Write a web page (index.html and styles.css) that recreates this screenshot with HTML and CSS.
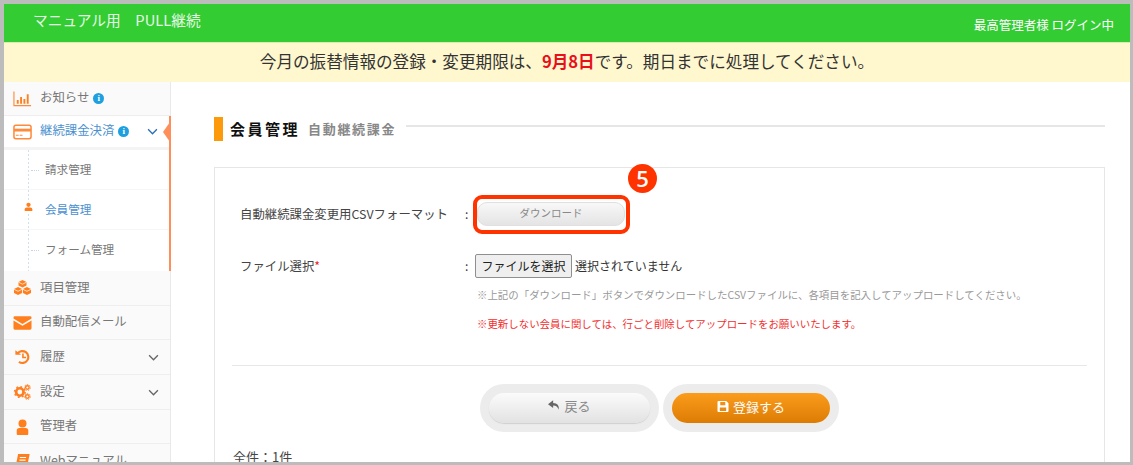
FILE: index.html
```html
<!DOCTYPE html>
<html lang="ja">
<head>
<meta charset="utf-8">
<title>会員管理</title>
<link rel="stylesheet" href="styles.css">
</head>
<body>
<div class="frame">
  <header class="topbar">
    <div class="brand">マニュアル用　PULL継続</div>
    <div class="login">最高管理者様 ログイン中</div>
  </header>
  <div class="notice">今月の振替情報の登録・変更期限は、<strong>9月8日</strong>です。期日までに処理してください。</div>
  <div class="layout">
    <nav class="sidebar">
      <a class="item h34">
        <svg class="ico" viewBox="0 0 20 16"><path d="M1 0v15h18" fill="none" stroke="#ff8a3c" stroke-width="1.2"/><path d="M4 9h2v4H4zM7.500 6h2v7h-2zM11 8h2v5h-2zM14.500 3h2v10h-2z" fill="#ff7f1f"/></svg>
        <span>お知らせ</span><i class="info">i</i>
      </a>
      <div class="open">
        <a class="item active">
          <svg class="ico" viewBox="0 0 20 16"><rect x="1" y="1" width="18" height="14" rx="2" fill="none" stroke="#ff8a3c" stroke-width="1.600"/><path d="M1 4.500h18v3H1z" fill="#ff8a3c"/><path d="M3 11h3v1H3zM7 11h3v1H7z" fill="#ff8a3c"/></svg>
          <span>継続課金決済</span><i class="info">i</i>
          <svg class="chev blue" viewBox="0 0 10 6"><path d="M1 1l4 4 4-4" fill="none" stroke="currentColor" stroke-width="1.200"/></svg>
        </a>
        <div class="sub">
          <a class="subitem"><b class="dash"></b>請求管理</a>
          <a class="subitem current"><svg class="person" viewBox="0 0 10 10"><circle cx="5" cy="2.600" r="2.400" fill="#ff7f1f"/><path d="M.8 9.500V7.500Q.8 5.500 3 5.500h4q2.200 0 2.200 2v2z" fill="#ff7f1f"/></svg>会員管理</a>
          <a class="subitem"><b class="dash"></b>フォーム管理</a>
        </div>
        <b class="pointer"></b>
      </div>
      <a class="item">
        <svg class="ico" viewBox="0 0 20 18"><path d="M10 0l4.500 2.200v4L10 8.400 5.500 6.200v-4zM5 8l4.500 2.200v4.500L5 17 .4 14.700v-4.500zM15 8l4.600 2.200v4.500L15 17l-4.500-2.300v-4.500z" fill="#ff7f1f"/><path d="M5.500 2.500L10 4.700l4.500-2.200M.5 10.500L5 12.700l4.500-2.200M10.500 10.500l4.500 2.200 4.500-2.200" fill="none" stroke="#fff" stroke-width=".8"/></svg>
        <span>項目管理</span>
      </a>
      <a class="item h34">
        <svg class="ico" viewBox="0 0 20 16"><path d="M2 1h16a1.500 1.500 0 0 1 1.500 1.500v.8L10 9 .5 3.300v-.8A1.500 1.500 0 0 1 2 1z" fill="#ff7f1f"/><path d="M.5 5.300L10 11l9.500-5.700v8.200A1.500 1.500 0 0 1 18 15H2a1.500 1.500 0 0 1-1.500-1.500z" fill="#ff7f1f"/></svg>
        <span>自動配信メール</span>
      </a>
      <a class="item">
        <svg class="ico" viewBox="0 0 20 18"><path d="M4.500 5A6.700 6.700 0 1 1 6 14.500" fill="none" stroke="#ff7f1f" stroke-width="2.400"/><path d="M2 1.500l6.500 5H2z" fill="#ff7f1f"/><path d="M10.500 5v4.500h3.500" fill="none" stroke="#ff7f1f" stroke-width="1.800"/></svg>
        <span>履歴</span>
        <svg class="chev" viewBox="0 0 10 6"><path d="M1 1l4 4 4-4" fill="none" stroke="currentColor" stroke-width="1.200"/></svg>
      </a>
      <a class="item">
        <svg class="ico" viewBox="0 0 20 18"><circle cx="7" cy="9" r="4.200" fill="none" stroke="#ff7f1f" stroke-width="3"/><circle cx="7" cy="9" r="6" fill="none" stroke="#ff7f1f" stroke-width="1.600" stroke-dasharray="2 2.700"/><circle cx="15.500" cy="4" r="2" fill="none" stroke="#ff7f1f" stroke-width="1.600"/><circle cx="15.500" cy="4" r="3.400" fill="none" stroke="#ff7f1f" stroke-width="1" stroke-dasharray="1.500 1.500"/><circle cx="15.500" cy="14" r="2" fill="none" stroke="#ff7f1f" stroke-width="1.600"/><circle cx="15.500" cy="14" r="3.400" fill="none" stroke="#ff7f1f" stroke-width="1" stroke-dasharray="1.500 1.500"/></svg>
        <span>設定</span>
        <svg class="chev" viewBox="0 0 10 6"><path d="M1 1l4 4 4-4" fill="none" stroke="currentColor" stroke-width="1.200"/></svg>
      </a>
      <a class="item h34">
        <svg class="ico" viewBox="0 0 20 18"><circle cx="10" cy="5" r="4.500" fill="#ff7f1f"/><path d="M3.500 17v-4q0-3 3-3h7q3 0 3 3v4q0 1-1 1h-11q-1 0-1-1z" fill="#ff7f1f"/></svg>
        <span>管理者</span>
      </a>
      <a class="item">
        <svg class="ico" viewBox="0 0 20 18"><path d="M5 1h13l-3 16H2z" fill="#ff7f1f"/><path d="M7 5h7M6.500 8h7" stroke="#fff" stroke-width="1.200"/></svg>
        <span>Webマニュアル</span>
      </a>
    </nav>
    <main class="main">
      <div class="title">
        <b class="mark"></b>
        <h1>会員管理</h1>
        <span class="subtitle">自動継続課金</span>
        <b class="rule"></b>
      </div>
      <section class="panel">
        <div class="row first">
          <div class="label">自動継続課金変更用CSVフォーマット</div>
          <div class="colon">:</div>
          <div class="control">
            <button class="download">ダウンロード</button>
            <b class="highlight"></b>
            <b class="step">5</b>
          </div>
        </div>
        <div class="row second">
          <div class="label">ファイル選択<em>*</em></div>
          <div class="colon">:</div>
          <div class="control">
            <div class="file"><button class="choose">ファイルを選択</button><span>選択されていません</span></div>
            <p class="hint">※上記の「ダウンロード」ボタンでダウンロードしたCSVファイルに、各項目を記入してアップロードしてください。</p>
            <p class="warn">※更新しない会員に関しては、行ごと削除してアップロードをお願いいたします。</p>
          </div>
        </div>
        <div class="actions">
          <div class="halo"><button class="btn back"><svg class="bi" viewBox="0 0 14 12"><path d="M6 0L0 4.500 6 9V6q5 0 6.500 5Q13.500 3 6 3z" fill="#666"/></svg>戻る</button></div>
          <div class="halo"><button class="btn save"><svg class="bi" viewBox="0 0 12 12"><path d="M1 0h8.500L12 2.500V11a1 1 0 0 1-1 1H1a1 1 0 0 1-1-1V1a1 1 0 0 1 1-1zm2 1v3.500h5.500V1zm-.5 6v4h7V7z" fill="#fff" fill-rule="evenodd"/></svg>登録する</button></div>
        </div>
        <div class="count">全件：1件</div>
      </section>
    </main>
  </div>
</div>
</body>
</html>
```

FILE: styles.css
```css
* { box-sizing: border-box; }
html, body { margin: 0; height: 100%; overflow: hidden; }
body {
  font-family: "Noto Sans CJK JP", "Open Sans", sans-serif;
  color: #555;
  background: #fff;
}
.frame {
  height: 465px;
  border: solid #bcbcbc;
  border-width: 4px 3px 3px 4px;
  overflow: hidden;
  display: flex;
  flex-direction: column;
}
.topbar {
  height: 38px;
  flex: none;
  background: #33cc33;
  color: #fff;
  display: flex;
  justify-content: space-between;
  padding: 0 16px 0 29px;
}
.brand { font-size: 14.700px; line-height: 32px; color: #e6f9e6; }
.login { font-size: 12.500px; line-height: 41px; }
.notice {
  height: 40px;
  flex: none;
  background: #fff8cf;
  border-top: 1px solid #d9ecae;
  text-align: center;
  font-size: 16.600px;
  line-height: 37px;
  color: #333;
}
.notice strong { color: #e8101a; font-weight: 700; }
.layout { flex: 1; display: flex; min-height: 0; }

.sidebar {
  width: 167px;
  flex: none;
  background: #fafafa;
  border-right: 1px solid #e9e9e9;
  display: flex;
  flex-direction: column;
}
.item {
  height: 35px;
  flex: none;
  display: flex;
  align-items: center;
  padding: 0 9px 0 9px;
  font-size: 12.400px;
  color: #777;
  border-bottom: 1px solid #eeeeee;
}
.item > span { margin-left: 8px; position: relative; top: -1.500px; }
.item.h34 { height: 34px; }
.ico { width: 19px; height: 16px; flex: none; }
.info {
  width: 11px;
  height: 11px;
  margin-left: 4px;
  border-radius: 50%;
  background: #1e9fe0;
  color: #fff;
  font: 700 9px/11px "Liberation Serif", serif;
  text-align: center;
}
.chev { width: 11px; height: 7px; margin-left: auto; margin-right: 2px; color: #666; }
.chev.blue { color: #2a6fb5; }
.open { background: #fff; position: relative; border-right: 2px solid #ff8f5a; margin-right: -1px; }
.active { height: 34px; background: #fff; border-bottom: 3px solid #f4f4f4; color: #4a90d0; }
.sub {
  height: 121px;
  background: repeating-linear-gradient(#d0e0f0 0 2px, transparent 2px 4px) 24px 0 / 1px 100% no-repeat;
}
.subitem {
  height: 40px;
  display: flex;
  align-items: center;
  padding: 0 0 2px 41px;
  font-size: 11.600px;
  color: #777;
  position: relative;
  border-bottom: 1px solid #f7f7f7;
}
.subitem:last-child { border-bottom: 0; }
.subitem.current { color: #4a90d0; }
.dash { position: absolute; left: 27px; top: 50%; width: 8px; border-top: 1px dotted #c5d5e5; }
.person { position: absolute; left: 20px; top: 12px; width: 9px; height: 10px; background: #fff; }
.pointer {
  position: absolute;
  right: -1px;
  top: 6px;
  width: 0;
  height: 0;
  border: solid transparent;
  border-width: 10px 7px 10px 0;
  border-right-color: #ff8f5a;
}

.main { flex: 1; min-width: 0; padding: 34px 25px 0 43px; background: #fff; }
.title { display: flex; align-items: center; height: 26px; }
.mark { width: 9px; height: 24px; background: #fc9a0c; margin-right: 7px; }
.title h1 { margin: 0 0 2px; font-size: 15px; font-weight: 700; color: #111; letter-spacing: 2.500px; }
.subtitle { margin: 0 0 1px 8px; font-size: 13px; font-weight: 700; color: #888; letter-spacing: 1.700px; }
.rule { flex: 1; margin: -6px 0 0 10px; border-top: 2px solid #e6e6e6; }
.panel {
  margin-top: 25px;
  border: 1px solid #e6e6e6;
  padding: 0 17px;
  height: 320px;
}
.row { display: flex; }
.row.first { padding-top: 30px; height: 82px; }
.label { width: 233px; padding-left: 8px; flex: none; font-size: 12.400px; color: #444; }
.row.first .label { line-height: 33px; }
.label em { color: #e8101a; font-style: normal; }
.colon { width: 10px; font-size: 12px; line-height: 32px; color: #333; flex: none; }
.control { position: relative; flex: 1; }
.download {
  display: block;
  width: 148px;
  height: 24px;
  margin: 4px 0 0 2px;
  border: 1px solid #e0e0e0;
  border-radius: 10px;
  background: linear-gradient(#f8f8f8, #e4e4e4);
  font: 10.500px "Noto Sans CJK JP", sans-serif;
  color: #888;
  padding: 0 0 3px;
}
.highlight {
  position: absolute;
  left: -2px;
  top: -3px;
  width: 157px;
  height: 39px;
  border: 4px solid #ff3300;
  border-radius: 9px;
}
.step {
  position: absolute;
  left: 153px;
  top: -34px;
  width: 29px;
  height: 29px;
  border-radius: 50%;
  background: #ff3300;
  color: #fff;
  font: 600 22px/29px "Open Sans", sans-serif;
  text-align: center;
}
.row.second { height: 116px; border-bottom: 1px solid #e8e8e8; }
.file { display: flex; align-items: center; font-size: 12px; color: #333; height: 24px; margin-top: 4px; }
.file span { position: relative; top: -1px; }
.choose {
  width: 97px;
  height: 24px;
  padding: 0 0 2px;
  margin-right: 3px;
  border: 1px solid #8f8f8f;
  border-radius: 2px;
  background: #efefef;
  font: 12px "Noto Sans CJK JP", sans-serif;
  color: #222;
}
.hint { margin: 9px 0 0 2px; font-size: 10.450px; line-height: 15px; color: #999; white-space: nowrap; }
.warn { margin: 14px 0 0 2px; font-size: 10.440px; line-height: 15px; color: #f03030; white-space: nowrap; }
.second .label { line-height: 32px; }
.actions { display: flex; justify-content: center; gap: 4px; margin-top: 18px; }
.halo {
  padding: 9px;
  border-radius: 24px;
  background: #ececec;
}
.btn {
  width: 161px;
  height: 30px;
  display: flex;
  align-items: center;
  justify-content: center;
  border-radius: 15px;
  border: 0;
  padding: 0 0 2px;
  font: 13px "Noto Sans CJK JP", sans-serif;
}
.back { background: linear-gradient(#fbfbfb, #e2e2e2); color: #888; box-shadow: 0 1px 1px #d0d0d0; padding-bottom: 5px; }
.save { background: linear-gradient(#fc9c1c, #dc7c04); color: #fff; width: 158px; padding-bottom: 3px; }
.bi { width: 12px; height: 11px; margin-right: 4px; }
.count { margin-top: 15px; margin-left: 1px; font-size: 13px; color: #444; }
```
